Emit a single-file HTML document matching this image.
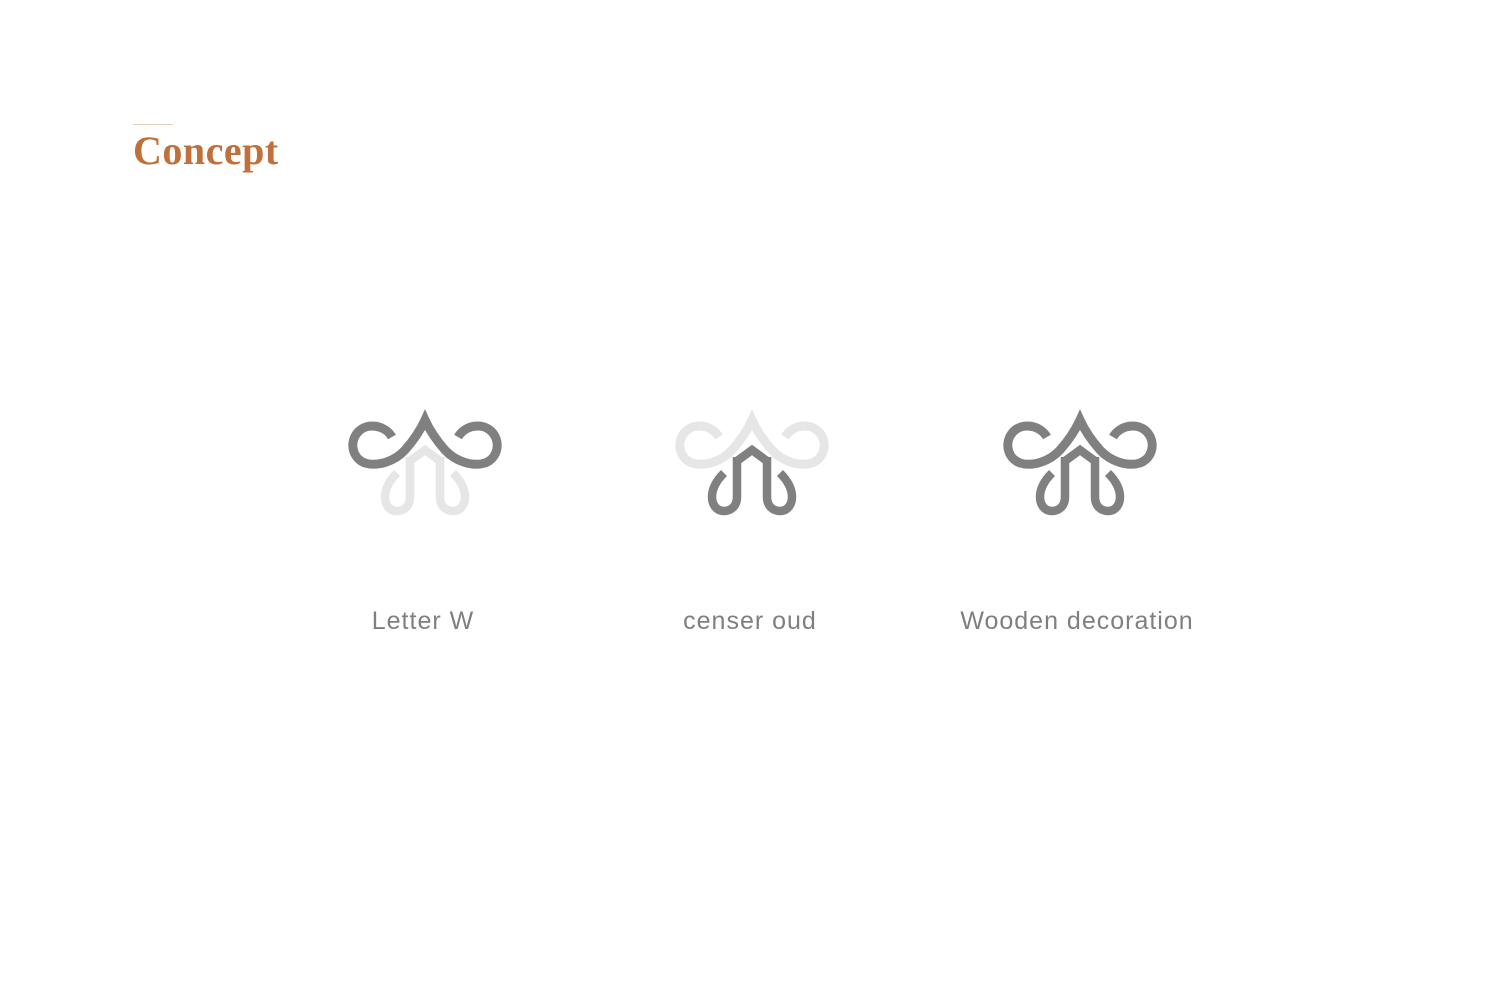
<!DOCTYPE html>
<html><head><style>
body{margin:0;width:1500px;height:1000px;background:#fff;position:relative;overflow:hidden;font-family:"Liberation Sans",sans-serif}
.line{position:absolute;left:133px;top:124px;width:40px;height:1px;background:#e8cdb8}
h1{position:absolute;left:133px;top:127px;margin:0;font:bold 40px "Liberation Serif",serif;color:#c0703a;letter-spacing:0.5px}
.lbl{position:absolute;top:607px;width:300px;text-align:center;font-size:25px;color:#7f7f7f;letter-spacing:1px}
svg{position:absolute;top:405px}
</style></head><body>
<div class="line"></div>
<h1>Concept</h1>
<svg width="0" height="0" style="position:absolute">
<defs>
<g id="top">
<path d="M47,32 C40,20 22,17 13,27 C4,37 7,53 20,58 C33,62 50,56 60,45 C68,36 75,26 80,15 C85,26 92,36 100,45 C110,56 127,62 140,58 C153,53 156,37 147,27 C138,17 120,20 113,32" fill="none" stroke-width="9"/>
<path d="M80,11 L88,30 L80,25 L72,30 Z" stroke="none"/>
</g>
<g id="bot" fill="none" stroke-width="8.5">
<path d="M65,56 L80,45 L95,56"/>
<path d="M65,52 L65,92 C65,102 58,106 52,106 C44,106 40,99 40,92 C40,82 46,74 52,68"/>
<path d="M95,52 L95,92 C95,102 102,106 108,106 C116,106 120,99 120,92 C120,82 114,74 108,68"/>
</g>
</defs></svg>
<svg style="left:345px" width="160" height="115"><use href="#bot" stroke="#e6e6e6"/><use href="#top" stroke="#808080" fill="#808080"/></svg>
<svg style="left:672px" width="160" height="115"><use href="#top" stroke="#e6e6e6" fill="#e6e6e6"/><use href="#bot" stroke="#808080"/></svg>
<svg style="left:1000px" width="160" height="115"><use href="#top" stroke="#808080" fill="#808080"/><use href="#bot" stroke="#808080"/></svg>
<div class="lbl" style="left:273px">Letter W</div>
<div class="lbl" style="left:600px">censer oud</div>
<div class="lbl" style="left:927px">Wooden decoration</div>
</body></html>
